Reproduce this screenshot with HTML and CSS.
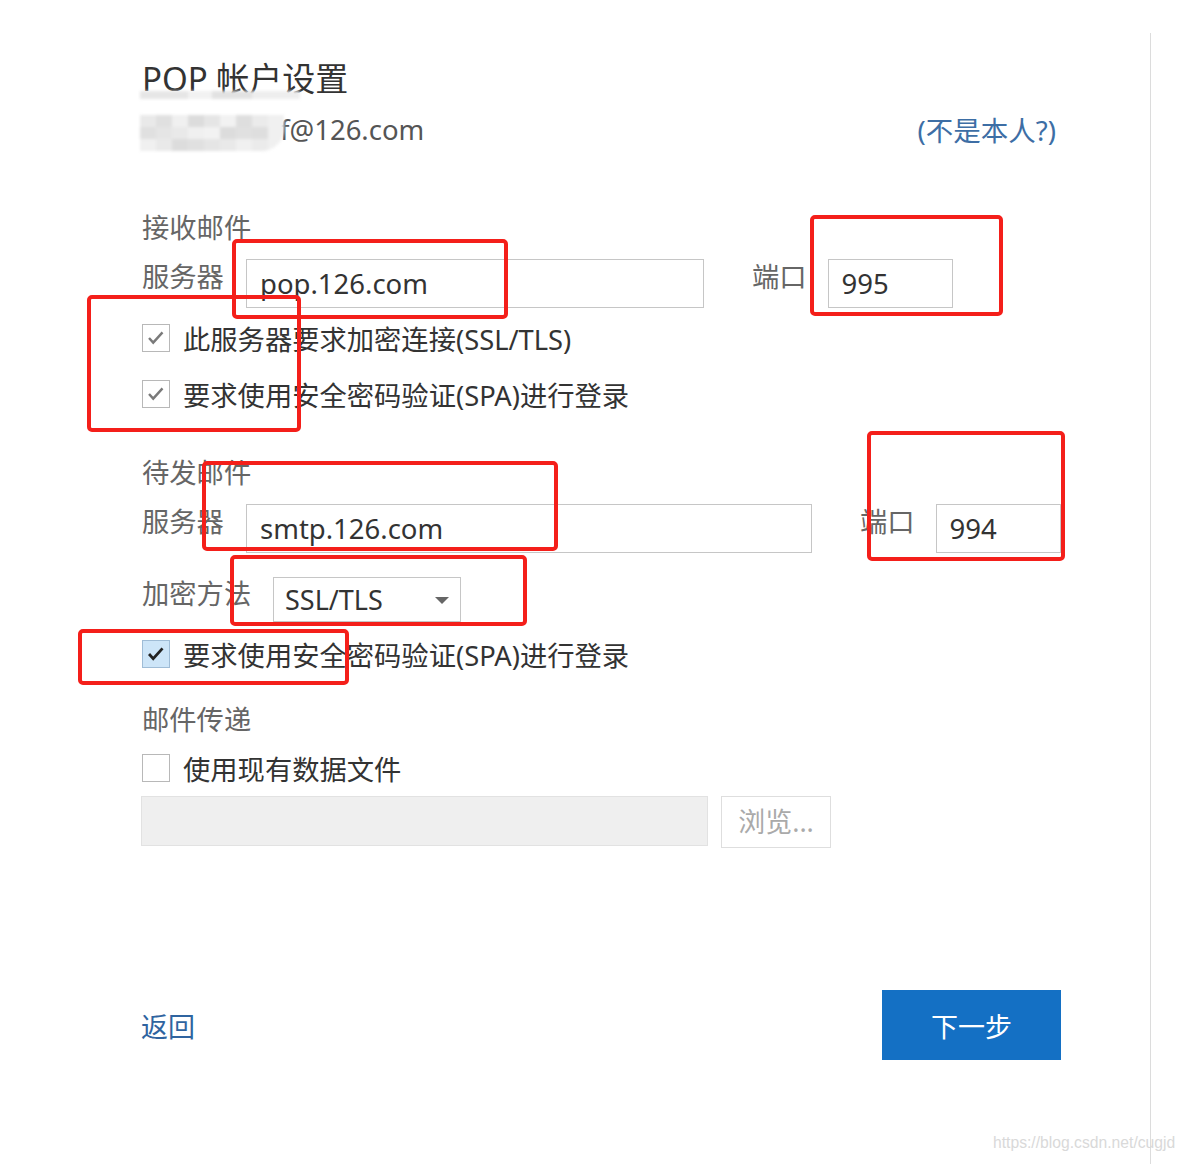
FILE: index.html
```html
<!DOCTYPE html>
<html lang="zh-CN">
<head>
<meta charset="utf-8">
<title>POP 帐户设置</title>
<link rel="stylesheet" href="styles.css">
</head>
<body>
<div class="dialog">
  <div class="content">
    <h1 class="title">POP 帐户设置</h1>
    <div class="email-row">
      <span class="email"><span class="masked"></span>f@126.com</span>
      <a class="link" href="#">(不是本人?)</a>
    </div>

    <div class="section s-in">接收邮件</div>
    <div class="field-row r-in">
      <span class="label">服务器</span>
      <div class="input in-server1">pop.126.com</div>
      <span class="port-label">端口</span>
      <div class="input in-port">995</div>
    </div>
    <label class="check-row c1"><span class="box checked"><svg viewBox="0 0 28 28"><path d="M6.5 14l4.5 5 10-11" /></svg></span>此服务器要求加密连接(SSL/TLS)</label>
    <label class="check-row c2"><span class="box checked"><svg viewBox="0 0 28 28"><path d="M6.5 14l4.5 5 10-11" /></svg></span>要求使用安全密码验证(SPA)进行登录</label>

    <div class="section s-out">待发邮件</div>
    <div class="field-row r-out">
      <span class="label">服务器</span>
      <div class="input in-server2">smtp.126.com</div>
      <span class="port-label">端口</span>
      <div class="input in-port2">994</div>
    </div>
    <div class="enc-row">
      <span class="label enc-label">加密方法</span>
      <div class="select">SSL/TLS<span class="arrow"></span></div>
    </div>
    <label class="check-row c3"><span class="box active"><svg viewBox="0 0 28 28"><path d="M6.5 14l4.5 5 10-11" /></svg></span>要求使用安全密码验证(SPA)进行登录</label>

    <div class="section s-del">邮件传递</div>
    <label class="check-row c4"><span class="box"></span>使用现有数据文件</label>
    <div class="file-row">
      <div class="file-input"></div>
      <div class="browse">浏览...</div>
    </div>

    <div class="footer">
      <a class="back" href="#">返回</a>
      <button class="next">下一步</button>
    </div>
  </div>
</div>

<div class="mosaic">
  <span class="m m1"></span><span class="m m2"></span><span class="m m3"></span><span class="m m4"></span><span class="m m5"></span><span class="m m6"></span><span class="m m7"></span><span class="m m8"></span><span class="m m9"></span>
  <span class="m m2"></span><span class="m m5"></span><span class="m m1"></span><span class="m m3"></span><span class="m m6"></span><span class="m m4"></span><span class="m m2"></span><span class="m m7"></span><span class="m m9"></span>
  <span class="m m3"></span><span class="m m1"></span><span class="m m4"></span><span class="m m2"></span><span class="m m5"></span><span class="m m1"></span><span class="m m3"></span><span class="m m8"></span><span class="m m9"></span>
</div>
<div class="strip"></div>

<div class="mark mk1"></div>
<div class="mark mk2"></div>
<div class="mark mk3"></div>
<div class="mark mk4"></div>
<div class="mark mk5"></div>
<div class="mark mk6"></div>
<div class="mark mk7"></div>

<div class="watermark">https://blog.csdn.net/cugjd</div>
</body>
</html>
```

FILE: styles.css
```css
html, body {
  margin: 0;
  padding: 0;
  background: #fff;
}
body {
  font-family: "Noto Sans", "Noto Sans CJK SC", sans-serif;
  color: #444;
  width: 1184px;
  height: 1164px;
  overflow: hidden;
  position: relative;
}
.dialog {
  width: 1151px;
  margin-top: 33px;
  height: 1131px;
  border-right: 1px solid #dcdcdc;
  box-sizing: border-box;
}
.content {
  padding: 26px 0 0 142px;
  width: 918px;
  display: flex;
  flex-direction: column;
}
.title {
  margin: 0;
  font-weight: normal;
  font-size: 33px;
  line-height: 40px;
  height: 40px;
  color: #333;
}
.email-row {
  margin-top: 10px;
  height: 40px;
  display: flex;
  justify-content: space-between;
  align-items: center;
}
.email {
  font-size: 27.5px;
  color: #555;
  display: flex;
  align-items: center;
}
.masked {
  display: inline-block;
  width: 138px;
  height: 10px;
}
.link {
  font-size: 27.5px;
  color: #3d6ea5;
  text-decoration: none;
  margin-right: 4px;
}
.section {
  font-size: 27.3px;
  line-height: 36px;
  height: 36px;
  color: #666;
}
.s-in { margin-top: 61px; }
.s-out { margin-top: 47px; }
.s-del { margin-top: 34px; }

.field-row {
  display: flex;
  align-items: flex-start;
  height: 49px;
  margin-top: 13px;
  white-space: nowrap;
}
.field-row > * {
  flex: none;
}
.label {
  width: 104px;
  flex: none;
  font-size: 27.3px;
  line-height: 36px;
  color: #666;
  white-space: nowrap;
}
.port-label {
  font-size: 27.3px;
  line-height: 36px;
  color: #666;
  margin-left: 48px;
  margin-right: 21px;
}
.input {
  box-sizing: border-box;
  height: 49px;
  border: 1px solid #c6c6c6;
  padding-left: 13px;
  font-size: 27.5px;
  line-height: 47px;
  color: #333;
  background: #fff;
}
.in-server1 { width: 458px; }
.in-port { width: 125px; }
.in-server2 { width: 566px; }
.in-port2 { width: 125px; }

.check-row {
  display: flex;
  align-items: center;
  height: 28px;
  font-size: 27.3px;
  color: #333;
  white-space: nowrap;
}
.c1 { margin-top: 16px; }
.c2 { margin-top: 28px; }
.c3 { margin-top: 18px; }
.c4 { margin-top: 16px; }
.box {
  width: 28px;
  height: 28px;
  box-sizing: border-box;
  border: 1px solid #b8b8b8;
  background: #fff;
  margin-right: 13px;
  flex: none;
  display: flex;
}
.box svg {
  width: 26px;
  height: 26px;
}
.box path {
  fill: none;
  stroke: #7a7a7a;
  stroke-width: 2.6;
}
.box.active {
  background: #cde5f8;
  border-color: #9fbcd6;
}
.box.active path {
  stroke: #222;
  stroke-width: 3;
}

.enc-row {
  display: flex;
  align-items: flex-start;
  margin-top: 24px;
  height: 45px;
}
.enc-label {
  width: 131px;
  margin-top: -1px;
}
.select {
  box-sizing: border-box;
  width: 188px;
  height: 45px;
  border: 1px solid #c6c6c6;
  padding-left: 11px;
  font-size: 27px;
  line-height: 43px;
  color: #333;
  position: relative;
  flex: none;
}
.arrow {
  position: absolute;
  right: 11px;
  top: 19px;
  width: 0;
  height: 0;
  border-left: 7px solid transparent;
  border-right: 7px solid transparent;
  border-top: 7px solid #666;
}

.file-row {
  display: flex;
  margin-top: 14px;
  height: 52px;
}
.file-input {
  width: 567px;
  height: 50px;
  box-sizing: border-box;
  background: #efefef;
  border: 1px solid #e2e2e2;
  margin-left: -1px;
  flex: none;
}
.browse {
  margin-left: 13px;
  width: 110px;
  height: 52px;
  box-sizing: border-box;
  border: 1px solid #dedede;
  font-size: 27px;
  line-height: 50px;
  text-align: center;
  color: #aaa;
  flex: none;
}

.footer {
  margin-top: 142px;
  display: flex;
  justify-content: space-between;
  align-items: center;
  height: 70px;
}
.back {
  font-size: 27px;
  color: #2f64a0;
  text-decoration: none;
  margin-left: -1px;
}
.next {
  width: 179px;
  height: 70px;
  border: none;
  background: #1470c4;
  color: #fff;
  font-family: "Noto Sans", "Noto Sans CJK SC", sans-serif;
  font-size: 27px;
  margin-right: -1px;
  padding: 0;
}

.mosaic {
  position: absolute;
  left: 140px;
  top: 115px;
  width: 144px;
  height: 36px;
  display: grid;
  grid-template-columns: repeat(9, 16px);
  grid-template-rows: repeat(3, 12px);
  filter: blur(1.5px);
  border-radius: 0 0 22px 0;
  overflow: hidden;
}
.m { display: block; }
.m1 { background: #e9e9e9; }
.m2 { background: #e0e0e0; }
.m3 { background: #f0f0f0; }
.m4 { background: #dcdcdc; }
.m5 { background: #e5e5e5; }
.m6 { background: #f2f2f2; }
.m7 { background: #dedede; }
.m8 { background: #ebebeb; }
.m9 { background: #f0f0f0; }
.strip {
  position: absolute;
  left: 140px;
  top: 91px;
  width: 160px;
  height: 8px;
  background: linear-gradient(90deg, #e6e6e6 0 30%, #f2f2f2 30% 45%, #e2e2e2 45% 70%, #eeeeee 70% 100%);
  filter: blur(1.5px);
}

.mark {
  position: absolute;
  border: 4px solid #f41f1a;
  border-radius: 5px;
  box-sizing: border-box;
}
.mk1 { left: 232px; top: 239px; width: 276px; height: 80px; }
.mk2 { left: 87px; top: 295px; width: 214px; height: 137px; }
.mk3 { left: 810px; top: 215px; width: 193px; height: 101px; }
.mk4 { left: 202px; top: 461px; width: 356px; height: 90px; }
.mk5 { left: 230px; top: 555px; width: 297px; height: 71px; }
.mk6 { left: 78px; top: 629px; width: 271px; height: 56px; }
.mk7 { left: 867px; top: 431px; width: 198px; height: 130px; }

.watermark {
  position: absolute;
  left: 993px;
  top: 1134px;
  font-family: "Liberation Sans", sans-serif;
  font-size: 15.7px;
  color: #d9d9d9;
}
```
